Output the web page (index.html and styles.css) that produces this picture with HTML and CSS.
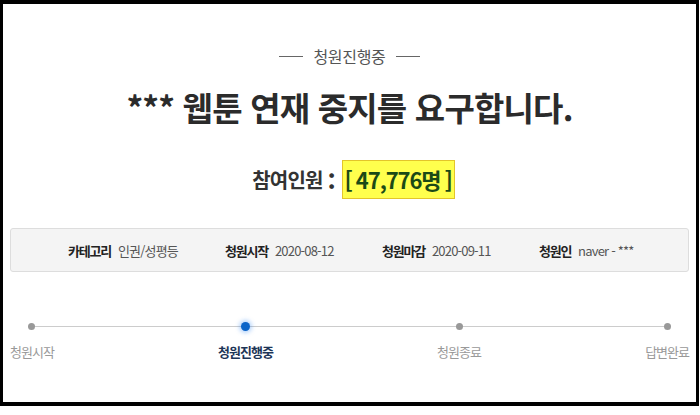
FILE: index.html
```html
<!DOCTYPE html>
<html lang="ko">
  <head>
    <meta charset="UTF-8" />
    <title>청원진행중</title>
    <link rel="stylesheet" href="styles.css">
  </head>
  <body>
    <div class="frame">
      <p class="status"><span>청원진행중</span></p>
      <h1 class="title">*** 웹툰 연재 중지를 요구합니다.</h1>
      <p class="count">참여인원 <b class="colon">:</b> <span class="num">[ 47,776명 ]</span></p>

      <ul class="info">
        <li><b>카테고리</b> 인권/성평등</li>
        <li><b>청원시작</b> 2020-08-12</li>
        <li><b>청원마감</b> 2020-09-11</li>
        <li><b>청원인</b> naver - ***</li>
      </ul>

      <ol class="steps">
        <li><i class="dot"></i>청원시작</li>
        <li class="on"><i class="dot"></i>청원진행중</li>
        <li><i class="dot"></i>청원종료</li>
        <li><i class="dot"></i>답변완료</li>
      </ol>
    </div>
  </body>
</html>
```

FILE: styles.css
```css
:root {
  font-family: "Noto Sans CJK KR", "Noto Sans", sans-serif;
  --ink: #333;
  --muted: #999;
  --blue: #0b64c8;
}
body {
  margin: 0;
  background: #fff;
}
.frame {
  box-sizing: border-box;
  width: 699px;
  height: 406px;
  border: solid #000;
  border-width: 4px 3px 4px 3px;
  padding: 42px 7px 0;
  color: var(--ink);
}
.status {
  margin: 0;
  display: flex;
  justify-content: center;
  align-items: center;
  gap: 10px;
  height: 20px;
  font-size: 16px;
  letter-spacing: -0.3px;
  color: #555;
}
.status::before,
.status::after {
  content: "";
  width: 24px;
  border-top: 1px solid #666;
}
.title {
  margin: 21px 0 0;
  line-height: 40px;
  text-align: center;
  font-size: 33px;
  font-weight: 700;
  letter-spacing: -0.8px;
  color: #2b2b2b;
}
.count {
  margin: 32px 0 0;
  display: flex;
  justify-content: center;
  align-items: center;
  gap: 3px;
  height: 40px;
  padding-left: 8px;
  font-size: 20px;
  font-weight: 700;
  letter-spacing: -0.8px;
}
.count .colon {
  font-size: 22px;
  margin: 2px 4px 0 2px;
}
.num {
  box-sizing: border-box;
  height: 39px;
  padding: 0 2px;
  line-height: 37px;
  background: #ffff4d;
  border: 1px solid #e3c52a;
  color: #1b4a16;
  font-size: 22px;
  letter-spacing: -1.1px;
  word-spacing: -1px;
}
.info {
  margin: 29px 0 0;
  padding: 0 0 0 57px;
  list-style: none;
  display: grid;
  grid-template-columns: repeat(4, 157px);
  align-items: center;
  height: 44px;
  box-sizing: border-box;
  background: #f4f4f4;
  border: 1px solid #ddd;
  border-radius: 3px;
  font-size: 13px;
  letter-spacing: -0.8px;
  color: #555;
}
.info b {
  color: #222;
  margin-right: 4px;
  letter-spacing: -1.2px;
}
.steps {
  position: relative;
  margin: 51px 0 0;
  padding: 0;
  list-style: none;
  display: flex;
  justify-content: space-between;
  font-size: 13px;
  letter-spacing: -1px;
  color: var(--muted);
}
.steps::before {
  content: "";
  position: absolute;
  left: 22px;
  right: 22px;
  top: 3px;
  border-top: 1px solid #ccc;
}
.steps li {
  display: flex;
  flex-direction: column;
  align-items: center;
  gap: 12px;
  line-height: 20px;
}
.dot {
  position: relative;
  width: 7px;
  height: 7px;
  border-radius: 50%;
  background: #999;
}
.steps .on {
  color: #1d3557;
  font-weight: 700;
}
.steps .on .dot {
  width: 9px;
  height: 9px;
  margin: -1px 0;
  background: var(--blue);
  box-shadow: 0 0 4px 2px rgba(40, 130, 240, 0.35);
}
```
